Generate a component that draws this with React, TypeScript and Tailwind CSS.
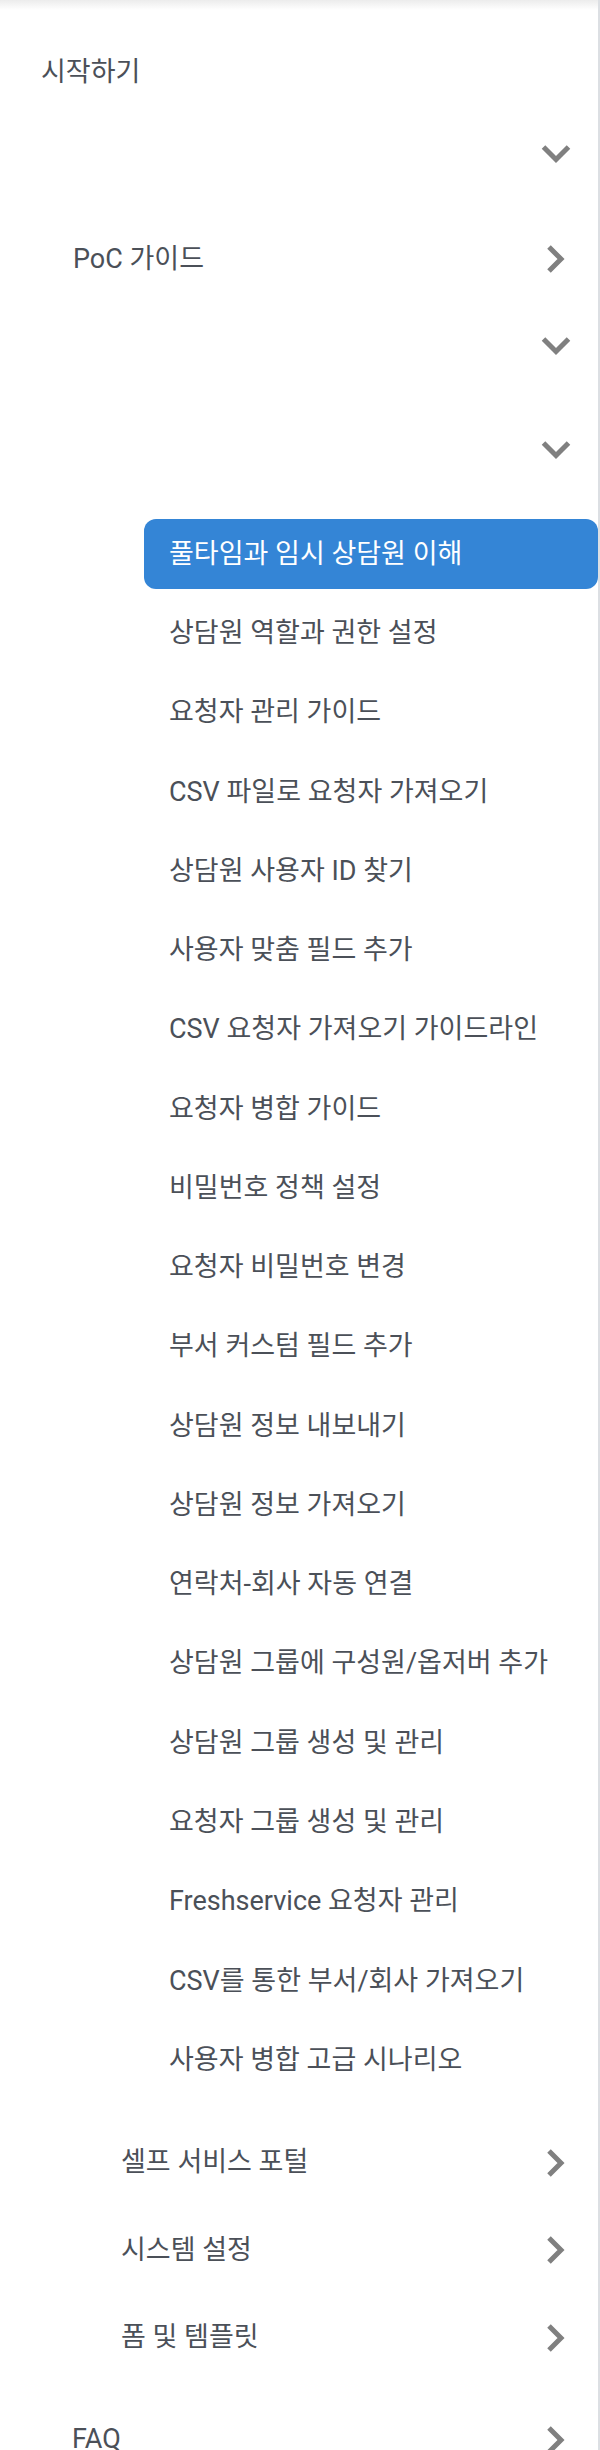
import React from "react";

const ChevronDown = () => (
  <svg width="32" height="20" viewBox="0 0 32 20" fill="none">
    <polyline points="3.5,2 16,14.5 28.5,2" stroke="#808080" strokeWidth="5" strokeLinecap="butt" strokeLinejoin="miter" />
  </svg>
);

const ChevronRight = () => (
  <svg width="22" height="30" viewBox="0 0 22 30" fill="none">
    <polyline points="4,3 16,15 4,27" stroke="#808080" strokeWidth="5" strokeLinecap="butt" strokeLinejoin="miter" />
  </svg>
);

const items = [
  "풀타임과 임시 상담원 이해",
  "상담원 역할과 권한 설정",
  "요청자 관리 가이드",
  "CSV 파일로 요청자 가져오기",
  "상담원 사용자 ID 찾기",
  "사용자 맞춤 필드 추가",
  "CSV 요청자 가져오기 가이드라인",
  "요청자 병합 가이드",
  "비밀번호 정책 설정",
  "요청자 비밀번호 변경",
  "부서 커스텀 필드 추가",
  "상담원 정보 내보내기",
  "상담원 정보 가져오기",
  "연락처-회사 자동 연결",
  "상담원 그룹에 구성원/옵저버 추가",
  "상담원 그룹 생성 및 관리",
  "요청자 그룹 생성 및 관리",
  "Freshservice 요청자 관리",
  "CSV를 통한 부서/회사 가져오기",
  "사용자 병합 고급 시나리오",
];

function Row({
  label,
  indent,
  icon,
  className,
}: {
  label?: string;
  indent: string;
  icon?: "down" | "right";
  className: string;
}) {
  return (
    <div className={`flex h-[70px] items-center justify-between ${className}`}>
      <span className={`${indent} text-[27px] text-[#4b5058]`}>{label ?? ""}</span>
      {icon ? (
        <span className="mr-[26px] flex w-[32px] items-center justify-center">
          {icon === "down" ? <ChevronDown /> : <ChevronRight />}
        </span>
      ) : null}
    </div>
  );
}

export default function App() {
  return (
    <div
      className="h-[2450px] w-[600px] overflow-hidden border-r-2 border-[#dcdfe3] bg-white"
      style={{ fontFamily: "Roboto, 'Noto Sans CJK KR', sans-serif" }}
    >
      <div className="h-[10px] bg-linear-to-b from-[#ececec] to-white" />
      <Row label="시작하기" indent="pl-[41px]" className="mt-[27px]" />
      <Row indent="pl-[41px]" icon="down" className="mt-[13px]" />
      <Row label="PoC 가이드" indent="pl-[73px]" icon="right" className="mt-[34px]" />
      <Row indent="pl-[73px]" icon="down" className="mt-[18px]" />
      <Row indent="pl-[73px]" icon="down" className="mt-[34px]" />
      <div className="mt-[33px] flex flex-col gap-[9.28px]">
        {items.map((t, i) => (
          <div
            key={t}
            className={`ml-[144px] flex h-[70px] items-center rounded-[12px] pl-[25px] text-[27px] ${
              i === 0 ? "bg-[#3485d6] text-white" : "text-[#4b5058]"
            }`}
          >
            {t}
          </div>
        ))}
      </div>
      <Row label="셀프 서비스 포털" indent="pl-[121px]" icon="right" className="mt-[32.7px]" />
      <Row label="시스템 설정" indent="pl-[121px]" icon="right" className="mt-[17.5px]" />
      <Row label="폼 및 템플릿" indent="pl-[121px]" icon="right" className="mt-[17.5px]" />
      <Row label="FAQ" indent="pl-[72px]" icon="right" className="mt-[32px]" />
    </div>
  );
}
